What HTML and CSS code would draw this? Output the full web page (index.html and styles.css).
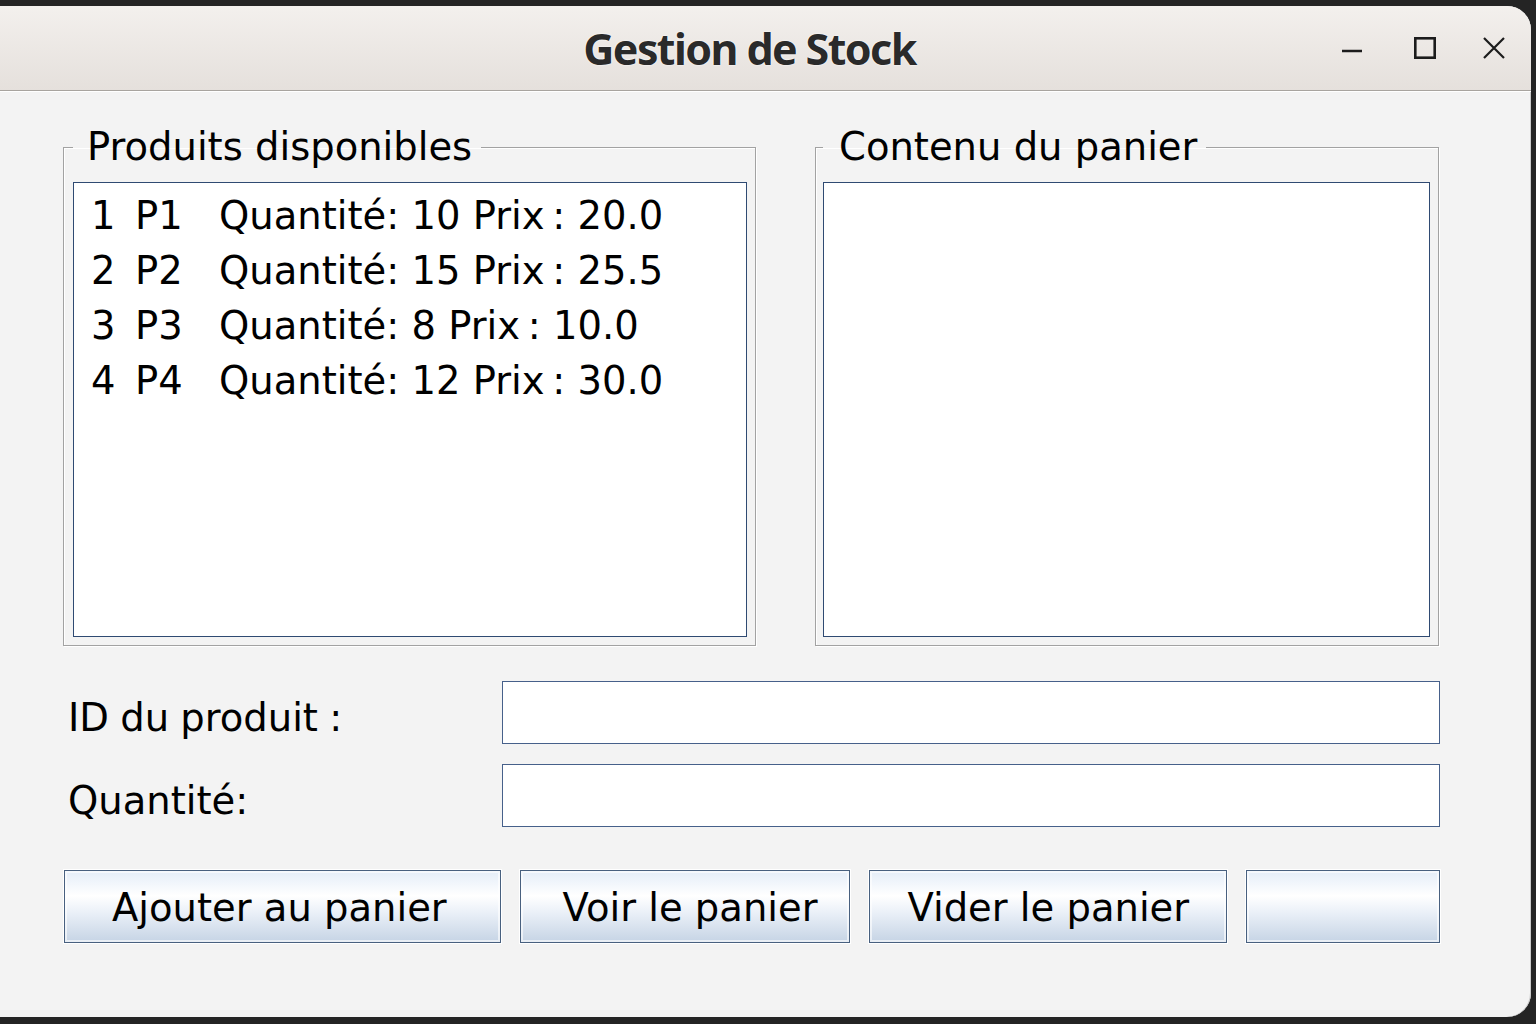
FILE: index.html
```html
<!DOCTYPE html>
<html lang="fr">
<head>
<meta charset="utf-8">
<title>Gestion de Stock</title>
<link rel="stylesheet" href="styles.css">
</head>
<body>
<div class="window">
  <header class="titlebar">
    <div class="spacer"></div>
    <h1 class="title">Gestion de Stock</h1>
    <div class="controls">
      <span class="ctrl ctrl-min">
        <svg width="22" height="22" viewBox="0 0 22 22"><line x1="1" y1="14" x2="21" y2="14" stroke="#1c1c1c" stroke-width="2.4"/></svg>
      </span>
      <span class="ctrl ctrl-max">
        <svg width="22" height="22" viewBox="0 0 22 22"><rect x="1.3" y="1.3" width="19.4" height="19.4" fill="none" stroke="#1c1c1c" stroke-width="2.6"/></svg>
      </span>
      <span class="ctrl ctrl-close">
        <svg width="22" height="22" viewBox="0 0 22 22"><path d="M1 1 L21 21 M21 1 L1 21" stroke="#1c1c1c" stroke-width="2.2" fill="none"/></svg>
      </span>
    </div>
  </header>
  <main class="content">
    <div class="groups">
      <fieldset class="group group-left">
        <legend class="group-title">Produits disponibles</legend>
        <ul class="list">
          <li class="row"><span class="c-id">1</span><span class="c-name">P1</span><span>Quantité: 10 Prix&#8201;: 20.0</span></li>
          <li class="row"><span class="c-id">2</span><span class="c-name">P2</span><span>Quantité: 15 Prix&#8201;: 25.5</span></li>
          <li class="row"><span class="c-id">3</span><span class="c-name">P3</span><span>Quantité: 8 Prix&#8201;: 10.0</span></li>
          <li class="row"><span class="c-id">4</span><span class="c-name">P4</span><span>Quantité: 12 Prix&#8201;: 30.0</span></li>
        </ul>
      </fieldset>
      <fieldset class="group group-right">
        <legend class="group-title">Contenu du panier</legend>
        <ul class="list"></ul>
      </fieldset>
    </div>
    <div class="form">
      <div class="form-row">
        <label class="form-label">ID du produit :</label>
        <div class="input"></div>
      </div>
      <div class="form-row">
        <label class="form-label">Quantité:</label>
        <div class="input"></div>
      </div>
    </div>
    <div class="buttons">
      <button class="btn btn-add">Ajouter au panier</button>
      <button class="btn btn-view">Voir le panier</button>
      <button class="btn btn-clear">Vider le panier</button>
      <button class="btn btn-empty"></button>
    </div>
  </main>
</div>
</body>
</html>
```
FILE: styles.css
```css
html, body {
  margin: 0;
  padding: 0;
}
body {
  background: #242424;
  width: 1536px;
  height: 1024px;
  overflow: hidden;
  padding-top: 6px;
  box-sizing: border-box;
  font-family: "DejaVu Sans", sans-serif;
}
.window {
  width: 1531px;
  height: 1011px;
  background: #f3f3f3;
  border-radius: 0 24px 24px 0;
  overflow: hidden;
  box-shadow: inset -1px 0 0 #c9c9c9;
}
.titlebar {
  height: 84px;
  display: grid;
  grid-template-columns: 1fr auto 1fr;
  align-items: center;
  background: linear-gradient(#f3f0ed, #e5e0dc);
  border-bottom: 1px solid #a8a49f;
  box-shadow: 0 1px 0 #ffffff;
}
.title {
  margin: 0;
  padding-right: 32px;
  font-family: "Noto Sans", sans-serif;
  font-weight: 700;
  font-size: 43px;
  letter-spacing: -1.6px;
  color: #2a2a2a;
  text-shadow: 0 0 2px #ffffff, 0 0 1px #ffffff;
  line-height: 1;
}
.controls {
  justify-self: end;
  display: flex;
  gap: 31px;
  padding-right: 17px;
}
.ctrl {
  width: 40px;
  height: 40px;
  display: flex;
  align-items: center;
  justify-content: center;
}
.ctrl-max { margin-left: 2px; margin-right: -2px; }
.ctrl svg { display: block; }

.content {
  padding: 36px 91px 0 63px;
  font-size: 38.5px;
  color: #000;
}
.groups {
  display: grid;
  grid-template-columns: 693px 624px;
  column-gap: 59px;
}
.group {
  margin: 0;
  padding: 15px 8px 8px 9px;
  border: 1px solid #a2a2a2;
  box-shadow: 1px 1px 0 #ffffff, inset 1px 1px 0 #ffffff;
  min-width: 0;
}
.group-right {
  padding-left: 7px;
  padding-right: 8px;
}
.group-title {
  padding: 0 9px 0 14px;
  font-size: 38.5px;
  line-height: 40px;
  color: #000;
}
.group-right .group-title {
  padding-left: 16px;
}
.list {
  list-style: none;
  margin: 0;
  padding: 5px 0 0 17px;
  height: 448px;
  background: #ffffff;
  border: 1px solid #2f4a72;
}
.row {
  display: flex;
  line-height: 55px;
  white-space: pre;
}
.c-id { width: 44px; }
.c-name { width: 84px; }

.form {
  margin-top: 35px;
  display: flex;
  flex-direction: column;
  gap: 20px;
}
.form-row {
  display: flex;
  align-items: center;
}
.form-label {
  width: 434px;
  padding-left: 5px;
  padding-top: 10px;
  word-spacing: -1px;
}
.input {
  flex: 1;
  height: 61px;
  background: #ffffff;
  border: 1px solid #46608a;
}

.buttons {
  margin-top: 43px;
  display: flex;
  gap: 19px;
  padding-left: 1px;
}
.btn {
  height: 73px;
  padding: 2px 0 0 0;
  font-family: "DejaVu Sans", sans-serif;
  font-size: 38.5px;
  color: #000;
  border: 1px solid #48607f;
  background: linear-gradient(#e4edf8 0%, #ffffff 35%, #e9eff7 60%, #c6d4e5 100%);
  box-shadow: inset 0 0 0 2px rgba(255, 255, 255, 0.6), 0 0 0 1px #ffffff;
}
.btn-add { width: 437px; padding-right: 6px; }
.btn-view { width: 331px; padding-left: 10px; }
.btn-clear { width: 358px; }
.btn-empty { width: 194px; }
```
